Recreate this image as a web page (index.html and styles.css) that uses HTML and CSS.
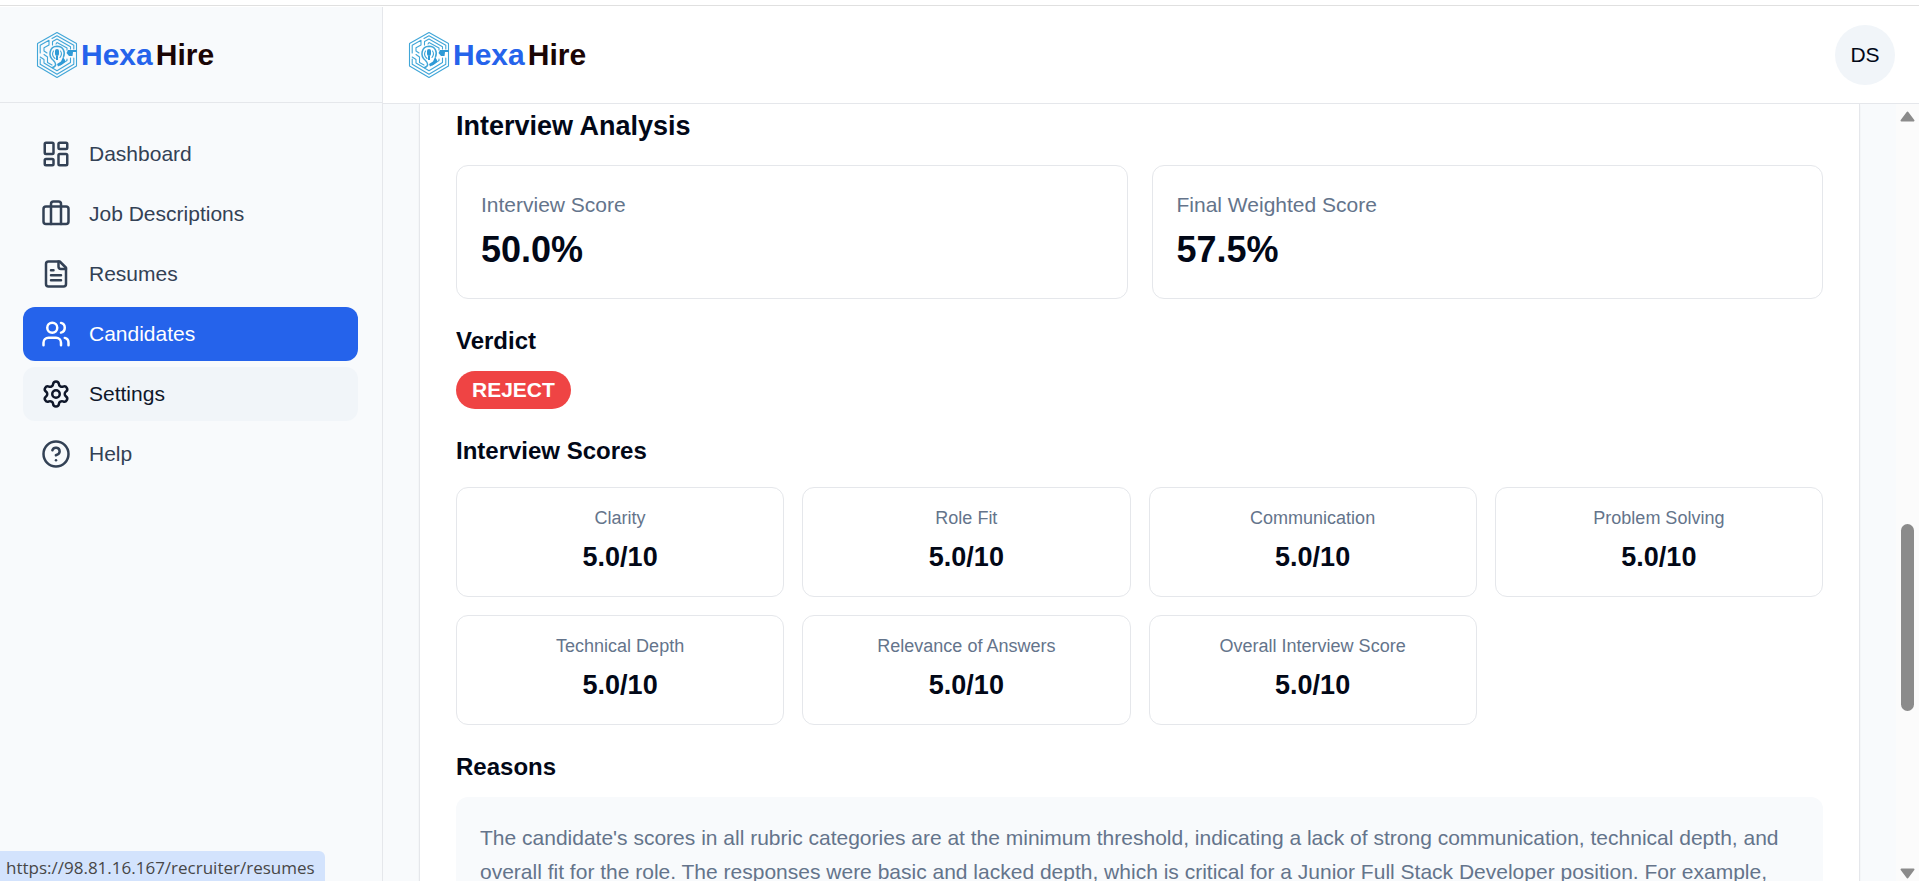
FILE: index.html
```html
<!DOCTYPE html>
<html lang="en">

<head>
    <meta charset="UTF-8">
    <meta name="viewport" content="width=device-width, initial-scale=1.0">
    <title>HexaHire</title>
    <link rel="stylesheet" href="styles.css">
</head>

<body>
    <!-- logo shared by the sidebar and the header -->
    <svg class="defs" aria-hidden="true">
        <symbol id="logo" viewBox="0 0 46 48">
            <g fill="none" stroke="#41a6d8" stroke-width="1.1" stroke-linejoin="round" stroke-linecap="round">
                <path d="M22 1.5 41.5 12.5V35L22 46.500 2.500 35V12.500Z" />
                <path d="M17 7.500 22 4.700 38.800 14.200V18M38.800 27V33.300L22 43.300 5.200 33.300V28M5.200 22V14.200L14 9.300V14L9 16.800V20L12 22" />
                <path d="M17.500 14V10.500L22 8 35.500 15.700V18M35.500 27V31.500L22 39.800 9 32V28.500L5.200 26" />
                <path d="M21 13 22 11.500 32 17V19M32 28V29.500L25 34" />
                <path d="M17 34 12.500 31.500V26L9 23.500" />
                <path stroke-width="1.500" d="M17.500 36.500C22 35.500 21 32 18.500 29.500C12.500 25 14.500 15.500 22 15.300C28.500 15.500 30.500 21 28.500 26" />
                <path d="M18.500 20C17 22.500 17.500 25.500 20 27.500M25.500 20C27 22 26.500 24.500 25 26.500" />
            </g>
            <g fill="#2f9ad6">
                <rect x="20" y="18" width="4" height="7" rx="2" />
                <path d="M21 25h2v4h-2zM33 19H41.500V21H38L37.500 25H34L31.500 22ZM28 26 30 29V31L27 33.500 23 35.500 22 33 26 30.500Z" />
            </g>
        </symbol>
    </svg>

    <div class="top-line"></div>

    <div class="layout">
        <aside class="sidebar">
            <div class="sidebar-header">
                <a href="#" class="logo">
                    <svg class="logo-img" aria-hidden="true"><use href="#logo" /></svg>
                    <span class="logo-hexa">Hexa</span>
                    <span class="logo-hire">Hire</span>
                </a>
            </div>
            <nav class="menu">
                <a href="#" class="menu-item">
                    <svg class="icon" viewBox="0 0 24 24">
                        <rect width="7" height="9" x="3" y="3" rx="1" />
                        <rect width="7" height="5" x="14" y="3" rx="1" />
                        <rect width="7" height="9" x="14" y="12" rx="1" />
                        <rect width="7" height="5" x="3" y="16" rx="1" />
                    </svg>
                    <span>Dashboard</span>
                </a>
                <a href="#" class="menu-item">
                    <svg class="icon" viewBox="0 0 24 24">
                        <path d="M16 20V4a2 2 0 0 0-2-2h-4a2 2 0 0 0-2 2v16" />
                        <rect width="20" height="14" x="2" y="6" rx="2" />
                    </svg>
                    <span>Job Descriptions</span>
                </a>
                <a href="#" class="menu-item">
                    <svg class="icon" viewBox="0 0 24 24">
                        <path d="M15 2H6a2 2 0 0 0-2 2v16a2 2 0 0 0 2 2h12a2 2 0 0 0 2-2V7Z" />
                        <path d="M14 2v4a2 2 0 0 0 2 2h4" />
                        <path d="M10 9H8M16 13H8M16 17H8" />
                    </svg>
                    <span>Resumes</span>
                </a>
                <a href="#" class="menu-item active">
                    <svg class="icon" viewBox="0 0 24 24">
                        <path d="M16 21v-2a4 4 0 0 0-4-4H6a4 4 0 0 0-4 4v2" />
                        <circle cx="9" cy="7" r="4" />
                        <path d="M22 21v-2a4 4 0 0 0-3-3.870" />
                        <path d="M16 3.130a4 4 0 0 1 0 7.750" />
                    </svg>
                    <span>Candidates</span>
                </a>
                <a href="#" class="menu-item hovered">
                    <svg class="icon" viewBox="0 0 24 24">
                        <path d="M9.671 4.136a2.340 2.340 0 0 1 4.659 0 2.340 2.340 0 0 0 3.319 1.915 2.340 2.340 0 0 1 2.330 4.033 2.340 2.340 0 0 0 0 3.831 2.340 2.340 0 0 1-2.330 4.033 2.340 2.340 0 0 0-3.319 1.915 2.340 2.340 0 0 1-4.659 0 2.340 2.340 0 0 0-3.320-1.915 2.340 2.340 0 0 1-2.330-4.033 2.340 2.340 0 0 0 0-3.831A2.340 2.340 0 0 1 6.350 6.051a2.340 2.340 0 0 0 3.319-1.915" />
                        <circle cx="12" cy="12" r="3" />
                    </svg>
                    <span>Settings</span>
                </a>
                <a href="#" class="menu-item">
                    <svg class="icon" viewBox="0 0 24 24">
                        <circle cx="12" cy="12" r="10" />
                        <path d="M9.090 9a3 3 0 0 1 5.830 1c0 2-3 3-3 3" />
                        <path d="M12 17h.01" />
                    </svg>
                    <span>Help</span>
                </a>
            </nav>
        </aside>

        <div class="main">
            <header class="header">
                <a href="#" class="logo">
                    <svg class="logo-img" aria-hidden="true"><use href="#logo" /></svg>
                    <span class="logo-hexa">Hexa</span>
                    <span class="logo-hire">Hire</span>
                </a>
                <button type="button" class="avatar">DS</button>
            </header>

            <div class="content">
                <main class="page">
                    <section class="panel">
                        <h2>Interview Analysis</h2>
                        <div class="summary">
                            <div class="summary-card">
                                <p class="summary-label">Interview Score</p>
                                <p class="summary-value">50.0%</p>
                            </div>
                            <div class="summary-card">
                                <p class="summary-label">Final Weighted Score</p>
                                <p class="summary-value">57.5%</p>
                            </div>
                        </div>

                        <h3>Verdict</h3>
                        <span class="badge">REJECT</span>

                        <h3 class="scores-title">Interview Scores</h3>
                        <div class="scores">
                            <div class="score-card">
                                <p class="score-label">Clarity</p>
                                <p class="score-value">5.0/10</p>
                            </div>
                            <div class="score-card">
                                <p class="score-label">Role Fit</p>
                                <p class="score-value">5.0/10</p>
                            </div>
                            <div class="score-card">
                                <p class="score-label">Communication</p>
                                <p class="score-value">5.0/10</p>
                            </div>
                            <div class="score-card">
                                <p class="score-label">Problem Solving</p>
                                <p class="score-value">5.0/10</p>
                            </div>
                            <div class="score-card">
                                <p class="score-label">Technical Depth</p>
                                <p class="score-value">5.0/10</p>
                            </div>
                            <div class="score-card">
                                <p class="score-label">Relevance of Answers</p>
                                <p class="score-value">5.0/10</p>
                            </div>
                            <div class="score-card">
                                <p class="score-label">Overall Interview Score</p>
                                <p class="score-value">5.0/10</p>
                            </div>
                        </div>

                        <h3>Reasons</h3>
                        <p class="reasons">The candidate's scores in all rubric categories are at the minimum threshold, indicating a lack of strong communication, technical depth, and overall fit for the role. The responses were basic and lacked depth, which is critical for a Junior Full Stack Developer position. For example,</p>
                    </section>
                </main>

                <div class="scrollbar" aria-hidden="true">
                    <svg class="scroll-arrow" viewBox="0 0 15 11">
                        <path d="M7.500 1.500 13.500 9.500H1.500Z" />
                    </svg>
                    <div class="scroll-before"></div>
                    <div class="scroll-thumb"></div>
                    <div class="scroll-after"></div>
                    <svg class="scroll-arrow" viewBox="0 0 15 11">
                        <path d="M1.500 1.500H13.500L7.500 9.500Z" />
                    </svg>
                </div>
            </div>
        </div>
    </div>

    <div class="status-url">https://98.81.16.167/recruiter/resumes</div>
</body>

</html>
```

FILE: styles.css
```css
* {
    margin: 0;
    padding: 0;
    box-sizing: border-box;
}

body {
    display: flex;
    flex-direction: column;
    height: 100vh;
    overflow: hidden;
    font-family: "Liberation Sans", Arial, sans-serif;
    font-size: 21px;
    line-height: 30px;
    color: #020817;
    background: #fff;
}

a {
    color: inherit;
    text-decoration: none;
}

.defs {
    position: absolute;
    width: 0;
    height: 0;
}

.top-line {
    flex: none;
    height: 6px;
    margin-bottom: 1px;
    border-bottom: 1px solid #e0e0e0;
}

.layout {
    flex: 1;
    display: flex;
    min-height: 0;
}

/* logo */
.logo {
    display: flex;
    align-items: center;
    font-size: 30px;
    font-weight: bold;
}

.logo-img {
    width: 46px;
    height: 48px;
}

.logo-hexa {
    color: #2563eb;
}

.logo-hire {
    margin-left: 3px;
    color: #1a0505;
}

/* sidebar */
.sidebar {
    flex: none;
    width: 383px;
    background: #f8fafc;
    border-right: 1px solid #e5e7eb;
}

.sidebar-header {
    display: flex;
    align-items: center;
    height: 96px;
    padding-left: 35px;
    border-bottom: 1px solid #e5e7eb;
}

.menu {
    display: flex;
    flex-direction: column;
    gap: 6px;
    padding: 24px 24px 24px 23px;
}

.menu-item {
    display: flex;
    align-items: center;
    gap: 18px;
    padding: 12px 18px;
    border-radius: 12px;
    color: #334155;
}

.menu-item.active {
    background: #2563eb;
    color: #fff;
}

.menu-item.hovered,
.menu-item:not(.active):hover {
    background: #f1f5f9;
    color: #0f172a;
}

.icon {
    width: 30px;
    height: 30px;
    fill: none;
    stroke: currentColor;
    stroke-width: 2;
    stroke-linecap: round;
    stroke-linejoin: round;
}

/* header */
.main {
    flex: 1;
    display: flex;
    flex-direction: column;
    min-width: 0;
}

.header {
    flex: none;
    display: flex;
    align-items: center;
    justify-content: space-between;
    padding: 18px 24px;
    border-bottom: 1px solid #e5e7eb;
}

.avatar {
    width: 60px;
    height: 60px;
    border: 0;
    border-radius: 50%;
    background: #f1f5f9;
    color: #020817;
    font-family: inherit;
    font-size: 21px;
    cursor: pointer;
}

/* content */
.content {
    flex: 1;
    display: flex;
    min-height: 0;
    background: #f8fafc;
}

.page {
    flex: 1;
    min-width: 0;
    padding: 0 36px;
    overflow: hidden;
}

.panel {
    padding: 1px 36px 36px;
    background: #fff;
    border: 1px solid #e5e7eb;
    border-top: 0;
    box-shadow: 0 1px 2px rgba(0, 0, 0, 0.05);
}

h2 {
    margin-bottom: 18px;
    font-size: 27px;
    line-height: 42px;
}

h3 {
    margin: 24px 0 12px;
    font-size: 24px;
    line-height: 36px;
}

.summary {
    display: grid;
    grid-template-columns: repeat(2, 1fr);
    gap: 24px;
}

.summary-card,
.score-card {
    border: 1px solid #e5e7eb;
    border-radius: 12px;
}

.summary-card {
    padding: 24px;
}

.summary-label {
    margin-bottom: 6px;
    color: #64748b;
}

.summary-value {
    font-size: 36px;
    line-height: 48px;
    font-weight: bold;
}

.badge {
    display: block;
    width: fit-content;
    padding: 4px 16px;
    border-radius: 19px;
    background: #ef4444;
    color: #fff;
    font-weight: bold;
}

.scores-title {
    margin-bottom: 18px;
}

.scores {
    display: grid;
    grid-template-columns: repeat(4, 1fr);
    gap: 18px;
}

.score-card {
    padding: 18px;
    text-align: center;
}

.score-label {
    margin-bottom: 6px;
    font-size: 18px;
    line-height: 24px;
    color: #64748b;
}

.score-value {
    font-size: 27px;
    line-height: 42px;
    font-weight: bold;
}

.reasons {
    padding: 24px;
    border-radius: 12px;
    background: #f8fafc;
    line-height: 34px;
    color: #64748b;
}

/* scrollbar */
.scrollbar {
    flex: none;
    display: flex;
    flex-direction: column;
    align-items: center;
    width: 23px;
    padding: 7px 0 2px;
    background: #fbfbfb;
}

.scroll-arrow {
    flex: none;
    width: 15px;
    height: 11px;
    fill: #8b8b8b;
    stroke: #8b8b8b;
    stroke-width: 2;
    stroke-linejoin: round;
}

.scroll-before {
    flex: 402;
}

.scroll-thumb {
    flex: 187;
    width: 13px;
    border-radius: 7px;
    background: #8b8b8b;
}

.scroll-after {
    flex: 157;
}

/* link address in the corner of the window */
.status-url {
    position: absolute;
    left: 0;
    bottom: 0;
    height: 30px;
    padding: 0 10px 0 6px;
    border-top-right-radius: 6px;
    background: #d3e3fd;
    color: #474747;
    font-family: "Open Sans", "Noto Sans", sans-serif;
    font-size: 17px;
    line-height: 34px;
}
```
